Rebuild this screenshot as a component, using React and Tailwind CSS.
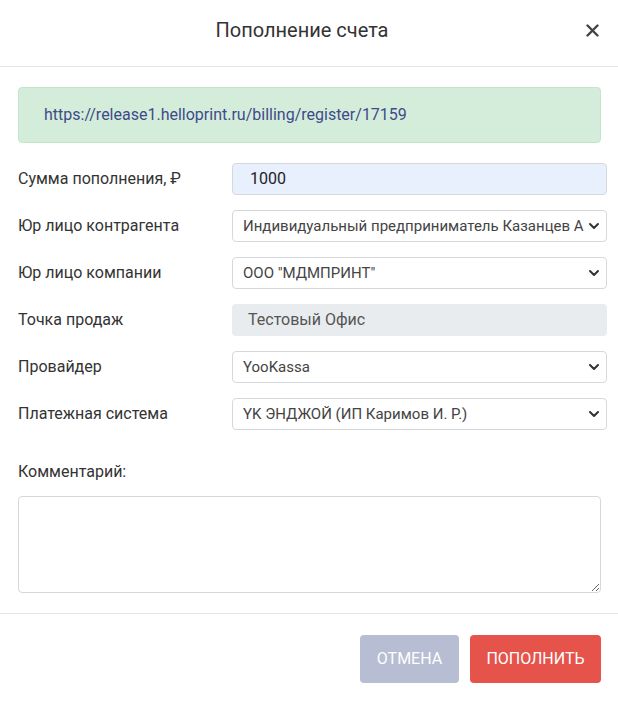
import React from "react";

const Chevron = () => (
  <svg width="12" height="12" viewBox="0 0 12 12" className="shrink-0">
    <path d="M2 4l4 4 4-4" fill="none" stroke="#333" strokeWidth="2" strokeLinecap="round" strokeLinejoin="round" />
  </svg>
);

const SelectBox = ({ value }) => (
  <div className="flex-1 h-8 flex items-center justify-between pl-[10px] pr-[6px] border border-[#d5d8dd] rounded-[4px] bg-white overflow-hidden">
    <span className="text-[15px] text-[#444] whitespace-nowrap overflow-hidden">{value}</span>
    <Chevron />
  </div>
);

const Row = ({ label, children }) => (
  <div className="flex items-center h-8 mr-[-6px]">
    <div className="w-[214px] shrink-0 text-[16px] text-[#333]">{label}</div>
    {children}
  </div>
);

export default function App() {
  return (
    <div className="w-[618px] h-[703px] bg-white font-['Roboto',sans-serif] flex flex-col">
      <div className="h-[67px] flex items-center justify-center relative border-b border-[#e6e6e6] pb-[6px]">
        <h2 className="text-[20px] text-[#333] font-normal mr-[14px]">Пополнение счета</h2>
        <button className="absolute right-[19px] top-[24px]">
          <svg width="13" height="13" viewBox="0 0 13 13">
            <path d="M1.5 1.5l10 10M11.5 1.5l-10 10" stroke="#444" strokeWidth="2.4" strokeLinecap="round" />
          </svg>
        </button>
      </div>

      <div className="pl-[18px] pr-[17px] pt-[20px] pb-[20px] border-b border-[#e6e6e6]">
        <div className="h-[56px] flex items-center pl-[25px] bg-[#d4edda] border border-[#c3e6cb] rounded-[4px]">
          <span className="text-[16px] text-[#3f4a8a]">https://release1.helloprint.ru/billing/register/17159</span>
        </div>

        <div className="flex flex-col gap-[15px] mt-[20px]">
          <Row label="Сумма пополнения, ₽">
            <div className="flex-1 h-8 flex items-center pl-[17px] bg-[#e8f0fe] border border-[#d5d8dd] rounded-[4px]">
              <span className="text-[16px] text-[#222]">1000</span>
            </div>
          </Row>
          <Row label="Юр лицо контрагента">
            <SelectBox value="Индивидуальный предприниматель Казанцев А" />
          </Row>
          <Row label="Юр лицо компании">
            <SelectBox value={'ООО "МДМПРИНТ"'} />
          </Row>
          <Row label="Точка продаж">
            <div className="flex-1 h-8 flex items-center pl-[16px] bg-[#e9ecef] rounded-[4px]">
              <span className="text-[16px] text-[#555]">Тестовый Офис</span>
            </div>
          </Row>
          <Row label="Провайдер">
            <SelectBox value="YooKassa" />
          </Row>
          <Row label="Платежная система">
            <SelectBox value="YK ЭНДЖОЙ (ИП Каримов И. Р.)" />
          </Row>
        </div>

        <div className="mt-[30px] text-[16px] text-[#333]">Комментарий:</div>
        <textarea className="mt-[12px] block w-full h-[97px] border border-[#d5d8dd] rounded-[4px] bg-white outline-none" />
      </div>

      <div className="flex justify-end gap-[11px] pr-[17px] pt-[21px]">
        <button className="w-[99px] h-[48px] rounded-[4px] bg-[#b7bed3] text-white text-[16px] uppercase">Отмена</button>
        <button className="w-[131px] h-[48px] rounded-[4px] bg-[#e5534b] text-white text-[16px] uppercase">Пополнить</button>
      </div>
    </div>
  );
}
